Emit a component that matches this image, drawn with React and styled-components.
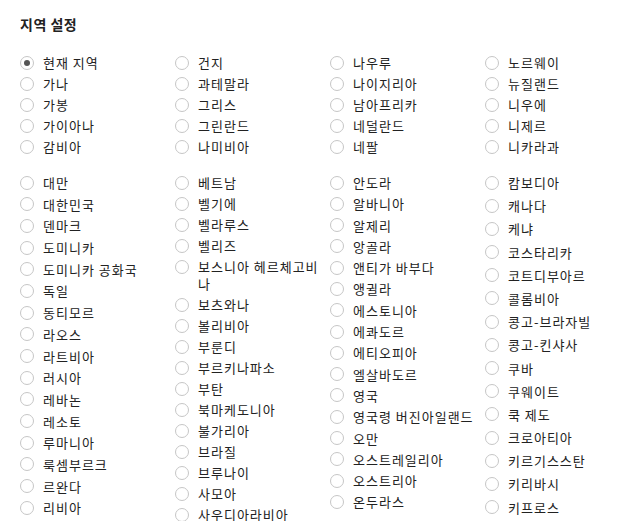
import React from "react";
import styled, { createGlobalStyle } from "styled-components";

const GlobalStyle = createGlobalStyle`
    body {
        margin: 0;
        background: #fff;
        font-family: "Noto Sans CJK KR", "Noto Sans", sans-serif;
        color: #222;
    }
`

const Page = styled.div`
    padding: 14px 0 0 20px;
    width: 600px;
`

const Title = styled.h3`
    margin: 0;
    font-size: 14px;
    line-height: 20px;
    font-weight: 700;
    letter-spacing: 0.5px;
    color: #222;
`

const Section = styled.div`
    display: grid;
    grid-template-columns: repeat(4, 155px);
    align-items: start;
    margin-top: ${({ first }) => (first ? "20px" : "19px")};
`

const Column = styled.div`
    display: flex;
    flex-direction: column;
    gap: ${({ gap }) => gap}px;
`

const Item = styled.label`
    display: flex;
    align-items: flex-start;
    font-size: 13px;
    line-height: 17px;
    letter-spacing: 1px;
    color: #222;
    cursor: pointer;
`

const Radio = styled.span`
    flex: none;
    box-sizing: border-box;
    width: 14px;
    height: 14px;
    margin-top: 1.5px;
    border: 1px solid #c6c6c6;
    border-radius: 50%;
    background: #fff;
    display: flex;
    align-items: center;
    justify-content: center;

    &::after {
        content: "";
        width: 6px;
        height: 6px;
        border-radius: 50%;
        background: ${({ checked }) => (checked ? "#555" : "transparent")};
    }
`

const Label = styled.span`
    margin-left: 9px;
    max-width: 128px;
`

const top = [
    ["현재 지역", "가나", "가봉", "가이아나", "감비아"],
    ["건지", "과테말라", "그리스", "그린란드", "나미비아"],
    ["나우루", "나이지리아", "남아프리카", "네덜란드", "네팔"],
    ["노르웨이", "뉴질랜드", "니우에", "니제르", "니카라과"]
]

const bottom = [
    {
        gap: 4.7,
        items: ["대만", "대한민국", "덴마크", "도미니카", "도미니카 공화국", "독일", "동티모르", "라오스", "라트비아", "러시아", "레바논", "레소토", "루마니아", "룩셈부르크", "르완다", "리비아"]
    },
    {
        gap: 4,
        items: ["베트남", "벨기에", "벨라루스", "벨리즈", "보스니아 헤르체고비나", "보츠와나", "볼리비아", "부룬디", "부르키나파소", "부탄", "북마케도니아", "불가리아", "브라질", "브루나이", "사모아", "사우디아라비아"]
    },
    {
        gap: 4.3,
        items: ["안도라", "알바니아", "알제리", "앙골라", "앤티가 바부다", "앵귈라", "에스토니아", "에콰도르", "에티오피아", "엘살바도르", "영국", "영국령 버진아일랜드", "오만", "오스트레일리아", "오스트리아", "온두라스"]
    },
    {
        gap: 6.2,
        items: ["캄보디아", "캐나다", "케냐", "코스타리카", "코트디부아르", "콜롬비아", "콩고-브라자빌", "콩고-킨샤사", "쿠바", "쿠웨이트", "쿡 제도", "크로아티아", "키르기스스탄", "키리바시", "키프로스"]
    }
]

function RadioItem({ name, checked }) {
    return (
        <Item>
            <Radio checked={checked} />
            <Label>{name}</Label>
        </Item>
    )
}

export default function App() {
    return (
        <>
            <GlobalStyle />
            <Page>
                <Title>지역 설정</Title>
                <Section first>
                    {top.map((col, i) => (
                        <Column key={i} gap={4}>
                            {col.map(name => <RadioItem key={name} name={name} checked={name === "현재 지역"} />)}
                        </Column>
                    ))}
                </Section>
                <Section>
                    {bottom.map((col, i) => (
                        <Column key={i} gap={col.gap}>
                            {col.items.map(name => <RadioItem key={name} name={name} />)}
                        </Column>
                    ))}
                </Section>
            </Page>
        </>
    )
}
